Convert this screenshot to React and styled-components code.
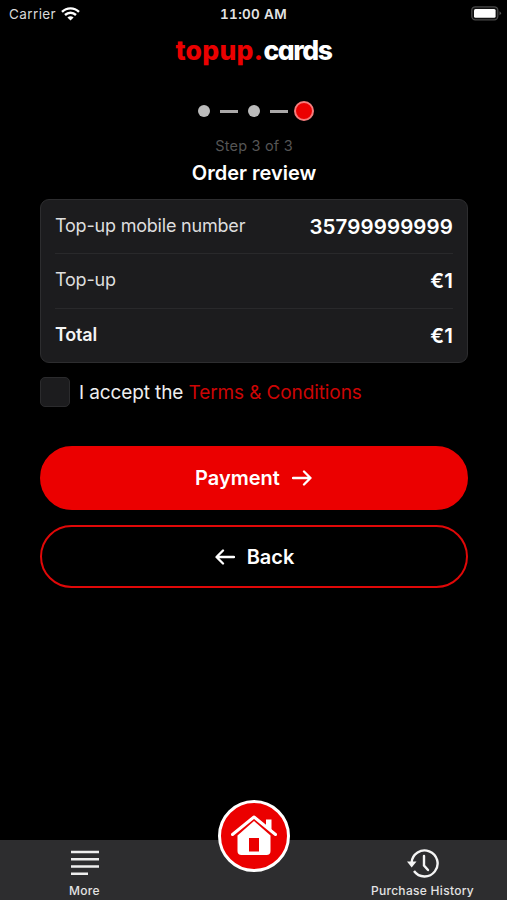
import React from "react";
import styled, { createGlobalStyle } from "styled-components";

const Global = createGlobalStyle`
  * { box-sizing: border-box; }
  html, body { margin: 0; background: #000; }
  body { font-family: Inter, "Liberation Sans", sans-serif; color: #fff; }
  button { font-family: inherit; }
`;

const Screen = styled.div`
  width: 507px;
  height: 900px;
  background: #000;
  display: flex;
  flex-direction: column;
  overflow: hidden;
`;

const StatusBar = styled.header`
  height: 28px;
  flex: none;
  display: grid;
  grid-template-columns: 1fr auto 1fr;
  align-items: center;
  padding: 0 5px 0 9px;
`;

const Carrier = styled.div`
  display: flex;
  align-items: center;
  gap: 5px;
  font-size: 13.5px;
  line-height: 28px;
  letter-spacing: 0.4px;
  color: #d8d8d8;
`;

const Clock = styled.div`
  font-size: 13.5px;
  font-weight: 600;
  line-height: 28px;
  letter-spacing: 0.3px;
  font-variant-numeric: tabular-nums;
  color: #e4e4e4;
  margin-right: 4px;
`;

const BatterySlot = styled.div`
  display: flex;
  justify-content: flex-end;
`;

const Logo = styled.div`
  height: 48px;
  flex: none;
  text-align: center;
  font-size: 26.5px;
  font-weight: 800;
  line-height: 45px;
  letter-spacing: -1.4px;
  font-feature-settings: "cv11";
`;

const LogoAccent = styled.span`
  color: #eb0000;
  letter-spacing: 0.3px;
`;

const Main = styled.main`
  flex: 1;
  display: flex;
  flex-direction: column;
  padding: 24px 39px 0 40px;
`;

const Steps = styled.div`
  height: 22px;
  display: flex;
  align-items: center;
  gap: 10px;
  padding-left: 158px;
`;

const StepDot = styled.span`
  width: ${(p) => (p.$active ? 20 : 12)}px;
  height: ${(p) => (p.$active ? 20 : 12)}px;
  border-radius: 50%;
  background: ${(p) => (p.$active ? "#eb0000" : "#bbb")};
  border: ${(p) => (p.$active ? "2px solid #f57c7c" : "none")};
  margin-left: ${(p) => (p.$active ? -4 : 0)}px;
`;

const StepLine = styled.span`
  width: 18px;
  height: 3px;
  background: #aaa8a8;
`;

const StepLabel = styled.div`
  margin-top: 14px;
  height: 20px;
  text-align: center;
  font-size: 14.5px;
  line-height: 20px;
  letter-spacing: 0.2px;
  color: #555;
`;

const Title = styled.h1`
  margin: 2px 0 0;
  height: 29px;
  text-align: center;
  font-size: 20px;
  font-weight: 600;
  line-height: 30px;
`;

const Card = styled.section`
  margin-top: 12px;
  height: 164px;
  padding: 0 14px;
  border: 1px solid #2d2d2f;
  border-radius: 9px;
  background: #1c1c1e;
`;

const Row = styled.div`
  height: 53px;
  display: flex;
  align-items: center;
  justify-content: space-between;
  & + & {
    height: 54.5px;
    border-top: 1px solid #29292b;
  }
`;

const RowLabel = styled.span`
  font-size: 18px;
  font-weight: ${(p) => (p.$strong ? 600 : 400)};
  letter-spacing: -0.2px;
  color: ${(p) => (p.$strong ? "#f5f5f5" : "#dedede")};
  padding-bottom: ${(p) => (p.$strong ? 1 : 2)}px;
`;

const RowValue = styled.span`
  font-size: 20.5px;
  font-weight: 600;
  letter-spacing: 0.1px;
`;

const Accept = styled.label`
  margin-top: 14px;
  height: 30px;
  display: flex;
  align-items: center;
  gap: 9px;
  font-size: 19px;
  letter-spacing: -0.11px;
  color: #eee;
  white-space: pre;
`;

const Checkbox = styled.span`
  width: 30px;
  height: 30px;
  border: 1px solid #2b2b2d;
  border-radius: 5px;
  background: #1c1c1e;
`;

const TermsLink = styled.span`
  color: #cc0505;
`;

const Actions = styled.div`
  margin-top: 39px;
  display: flex;
  flex-direction: column;
  gap: 15px;
`;

const Button = styled.button`
  height: ${(p) => (p.$outline ? 63 : 64)}px;
  display: flex;
  align-items: center;
  justify-content: center;
  gap: 12px;
  padding: 0;
  border: 2px solid #eb0000;
  border-color: ${(p) => (p.$outline ? "#e00808" : "#eb0000")};
  border-radius: 32px;
  background: ${(p) => (p.$outline ? "#000" : "#eb0000")};
  color: #fff;
  font-size: 20px;
  font-weight: 600;
`;

const TabBar = styled.nav`
  height: 60px;
  flex: none;
  display: grid;
  grid-template-columns: repeat(3, 1fr);
  background: #2d2d2f;
`;

const Tab = styled.div`
  display: flex;
  flex-direction: column;
  align-items: center;
  padding-top: 7px;
  font-size: 12px;
  font-weight: 500;
  line-height: 16px;
  letter-spacing: 0.3px;
  color: #e3e3e3;
  & > svg { margin-bottom: 4px; }
`;

const HomeButton = styled.div`
  justify-self: center;
  width: 72px;
  height: 72px;
  margin: -40px 0 0 1px;
  border: 3px solid #fff;
  border-radius: 50%;
  background: #eb0000;
  display: flex;
  align-items: center;
  justify-content: center;
`;

const WifiIcon = () => (
  <svg width="19" height="15" viewBox="0 0 19 15" fill="none" stroke="#fff" strokeWidth="2.4">
    <path d="M1 4.900C5.8 .2 13.2 .2 18 4.900M4 8c3.2-3 7.8-3 11 0" />
    <path d="M6.4 10.500Q9.500 8.100 12.600 10.500L9.500 13.500Z" fill="#fff" stroke="none" />
  </svg>
);

const BatteryIcon = () => (
  <svg width="31" height="16" viewBox="0 0 31 16">
    <rect x=".8" y=".8" width="26" height="13" rx="3.500" fill="#111" stroke="#484848" strokeWidth="1.300" />
    <rect x="3" y="3" width="21.600" height="8.800" rx="1.500" fill="#fff" />
    <path d="M28.500 5.300q3 2 0 4z" fill="#555" />
  </svg>
);

const Arrow = ({ left }) => (
  <svg width="21" height="18" viewBox="0 0 21 18" fill="none" stroke="#fff" strokeWidth="2.300" strokeLinecap="round" strokeLinejoin="round">
    <path d={left ? "M20 9H2.800M9 2.500L2.500 9l6.500 6.500" : "M1 9h17.500M12 2.500l6.500 6.500-6.500 6.500"} />
  </svg>
);

const HomeIcon = () => (
  <svg width="48" height="44" viewBox="0 0 48 44">
    <path d="M7.500 21.500L24 7l16.500 14.500V37a4 4 0 0 1-4 4h-25a4 4 0 0 1-4-4z" fill="#fff" />
    <path d="M1.500 19.500L24 1.500l22.500 18" fill="none" stroke="#eb0000" strokeWidth="6" />
    <path d="M2.500 20.500L24 3l21.500 17.500" fill="none" stroke="#fff" strokeWidth="3" strokeLinecap="round" strokeLinejoin="round" />
    <path d="M36 5.500h5.500V17.500l-5.500-4.500z" fill="#fff" />
    <rect x="19" y="24" width="10" height="13.500" fill="#eb0000" />
  </svg>
);

const MoreIcon = () => (
  <svg width="30" height="32" viewBox="0 0 30 32" stroke="#eee" strokeWidth="2.500">
    <path d="M1 5h28M1 12.300h28M1 19.500h28M1 26.800h17" />
  </svg>
);

const HistoryIcon = () => (
  <svg width="32" height="32" viewBox="0 0 32 32" fill="none" stroke="#f5f5f5" strokeWidth="2.400">
    <path d="M4.600 15.500A13 13 0 1 1 7 24" />
    <path d="M0 14.400h9.500L4.700 20.500z" fill="#f5f5f5" stroke="none" />
    <path d="M17 9v9.500l4 4.500" strokeLinecap="round" />
  </svg>
);

const rows = [
  { label: "Top-up mobile number", value: "35799999999" },
  { label: "Top-up", value: "€1" },
  { label: "Total", value: "€1", strong: true },
];

export default function App() {
  return (
    <>
      <Global />
      <Screen>
        <StatusBar>
          <Carrier>Carrier <WifiIcon /></Carrier>
          <Clock>11:00 AM</Clock>
          <BatterySlot><BatteryIcon /></BatterySlot>
        </StatusBar>
        <Logo><LogoAccent>topup.</LogoAccent>cards</Logo>
        <Main>
          <Steps>
            <StepDot /><StepLine /><StepDot /><StepLine /><StepDot $active />
          </Steps>
          <StepLabel>Step 3 of 3</StepLabel>
          <Title>Order review</Title>
          <Card>
            {rows.map((r) => (
              <Row key={r.label}>
                <RowLabel $strong={r.strong}>{r.label}</RowLabel>
                <RowValue>{r.value}</RowValue>
              </Row>
            ))}
          </Card>
          <Accept>
            <Checkbox />
            <span>I accept the <TermsLink>Terms &amp; Conditions</TermsLink></span>
          </Accept>
          <Actions>
            <Button>Payment <Arrow /></Button>
            <Button $outline><Arrow left /> Back</Button>
          </Actions>
        </Main>
        <TabBar>
          <Tab><MoreIcon />More</Tab>
          <HomeButton><HomeIcon /></HomeButton>
          <Tab><HistoryIcon />Purchase History</Tab>
        </TabBar>
      </Screen>
    </>
  );
}
